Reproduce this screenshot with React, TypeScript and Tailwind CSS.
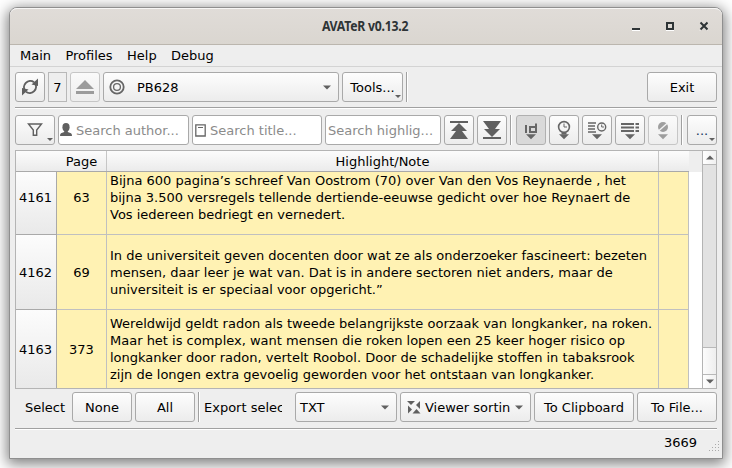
import type { ReactNode } from "react";

const BTN =
  "relative flex h-[30px] shrink-0 items-center rounded-[3px] border bg-linear-to-b whitespace-pre";
const FACE = "border-[#a9a9a9] from-[#fdfdfd] to-[#ececec]";
const FACE_DISABLED = "border-[#c6c6c6] from-[#fafafa] to-[#eeeeee]";
const FACE_PRESSED = "border-[#b0b0b0] from-[#d9d9d9] to-[#d9d9d9]";
const FIELD =
  "flex h-[30px] shrink-0 items-center rounded-[3px] border border-[#a9a9a9] bg-white text-[#8b8b8b] whitespace-pre";

function Arrow({ className = "" }: { className?: string }) {
  return (
    <svg className={className} width="8" height="5" viewBox="0 0 8 5">
      <path d="M0 0.5H8L4 4.5Z" fill="#606060" />
    </svg>
  );
}

function CornerArrow() {
  return (
    <svg className="absolute right-px bottom-[3px]" width="6" height="3" viewBox="0 0 6 3">
      <path d="M0 0H6L3 3Z" fill="#606060" />
    </svg>
  );
}

function Sep({ className }: { className: string }) {
  return <div className={`h-[30px] w-[2px] shrink-0 border-l border-l-[#a0a0a0] bg-white ${className}`} />;
}

function Rule({ className }: { className: string }) {
  return <div className={`h-[2px] shrink-0 border-t border-t-[#a0a0a0] bg-white ${className}`} />;
}

function SortButton({ children, face = FACE }: { children: ReactNode; face?: string }) {
  return (
    <div className={`${BTN} ${face} mr-[3px] w-[30px] justify-center`}>
      <svg width="28" height="28" viewBox="0 0 28 28" fill="none" stroke="#666" strokeWidth="2">
        {children}
        <path d="M9 18.3H19L14 23.3Z" fill="#666" stroke="none" />
      </svg>
    </div>
  );
}

const rows = [
  {
    id: "4161",
    page: "63",
    height: "h-[63px]",
    pad: "",
    numPad: "pb-[11px]",
    lines: [
      "Bijna 600 pagina’s schreef Van Oostrom (70) over Van den Vos Reynaerde , het",
      "bijna 3.500 versregels tellende dertiende-eeuwse gedicht over hoe Reynaert de",
      "Vos iedereen bedriegt en vernedert.",
    ],
  },
  {
    id: "4162",
    page: "69",
    height: "h-[75px]",
    pad: "pt-[12px]",
    numPad: "",
    lines: [
      "In de universiteit geven docenten door wat ze als onderzoeker fascineert: bezeten",
      "mensen, daar leer je wat van. Dat is in andere sectoren niet anders, maar de",
      "universiteit is er speciaal voor opgericht.”",
    ],
  },
  {
    id: "4163",
    page: "373",
    height: "h-[79px]",
    pad: "pt-[5px]",
    numPad: "",
    lines: [
      "Wereldwijd geldt radon als tweede belangrijkste oorzaak van longkanker, na roken.",
      "Maar het is complex, want mensen die roken lopen een 25 keer hoger risico op",
      "longkanker door radon, vertelt Roobol. Door de schadelijke stoffen in tabaksrook",
      "zijn de longen extra gevoelig geworden voor het ontstaan van longkanker.",
    ],
  },
];

function TitleBar() {
  return (
    <div className="grid h-[37px] shrink-0 grid-cols-[1fr_auto_1fr] items-center rounded-t-[7px] border-t border-b border-t-[#f7f6f5] border-b-[#bbb6ae] bg-linear-to-b from-[#e0dcd8] to-[#dad6d0]">
      <span />
      <span className="scale-x-[0.92] pr-[3px] font-['Noto_Sans',sans-serif] text-[13.3px] font-bold tracking-[-0.25px] text-[#2e3436]">
        AVATeR v0.13.2
      </span>
      <svg className="mr-[14px] mb-[2px] justify-self-end" width="76" height="12" viewBox="0 0 76 12">
        <path d="M0 10.5H8M34 10.5H42M68 10.5L69.5 9M76 10.5L74.5 9" stroke="#fff" />
        <path d="M0 9H8" stroke="#2e3436" strokeWidth="2" />
        <rect x="35" y="3" width="6" height="6" fill="none" stroke="#2e3436" strokeWidth="2" />
        <path d="M68.5 2.5L75.5 9.5M75.5 2.5L68.5 9.5" stroke="#2e3436" strokeWidth="2" />
      </svg>
    </div>
  );
}

function MainToolbar() {
  return (
    <div className="mt-[5px] flex shrink-0 pl-[5px]">
      <div className={`${BTN} ${FACE} w-[30px] justify-center`}>
        <svg width="18" height="18" viewBox="0 0 18 18" fill="none" stroke="#606060" strokeWidth="2">
          <path d="M4.2 13A6.3 6.3 0 0 1 13 4.2M13.8 5A6.3 6.3 0 0 1 5 13.8" />
          <path d="M17 0.5V8L10.5 6.5ZM1 17.5V10L7.5 11.5Z" fill="#606060" stroke="none" />
        </svg>
      </div>
      <div className="ml-[3px] flex h-[30px] w-[19px] items-center justify-center border border-[#b8b8b8]">7</div>
      <div className={`${BTN} ${FACE_DISABLED} ml-[3px] w-[30px] justify-center`}>
        <svg width="18" height="14" viewBox="0 0 18 14" fill="#9c9c9c">
          <path d="M9 0L18 9H0ZM0 11H18V14H0Z" />
        </svg>
      </div>
      <div className={`${BTN} ${FACE} ml-[3px] w-[236px]`}>
        <svg className="ml-[5px]" width="16" height="16" viewBox="0 0 16 16" fill="none" stroke="#666">
          <circle cx="8" cy="8" r="6.7" strokeWidth="1.8" />
          <circle cx="8" cy="8" r="3.4" strokeWidth="1.3" />
        </svg>
        <span className="ml-[12px] flex-1">PB628</span>
        <Arrow className="mr-[7px]" />
      </div>
      <div className={`${BTN} ${FACE} ml-[3px] w-[61px] justify-center`}>
        Tools...
        <CornerArrow />
      </div>
      <Sep className="ml-[3px]" />
      <div className={`${BTN} ${FACE} mr-[5px] ml-auto w-[70px] justify-center`}>Exit</div>
    </div>
  );
}

function SearchToolbar() {
  return (
    <div className="mt-[6px] flex shrink-0 pl-[5px]">
      <div className={`${BTN} ${FACE} mr-[3px] w-[40px] justify-center`}>
        <svg width="16" height="14" viewBox="0 0 16 14" fill="none" stroke="#606060" strokeWidth="1.4">
          <path d="M1.5 1H14.5L9.7 7V12.3H6.3V7Z" />
        </svg>
        <CornerArrow />
      </div>
      <div className={`${FIELD} mr-[3px] w-[131px]`}>
        <svg className="ml-px" width="12" height="14" viewBox="0 0 12 14" fill="#606060">
          <ellipse cx="6" cy="4.3" rx="3.6" ry="4.2" />
          <path d="M4.2 7H7.8V9L11 10.2Q12 10.8 12 13H0Q0 10.8 1 10.2L4.2 9Z" />
        </svg>
        <span className="ml-[4px]">Search author...</span>
      </div>
      <div className={`${FIELD} mr-[3px] w-[130px]`}>
        <svg className="ml-[2px]" width="11" height="13" viewBox="0 0 11 13" fill="none" stroke="#666">
          <path d="M0.8 0.8H10.2V12H0.8Z" strokeWidth="1.3" />
          <path d="M3 3.5H8" />
        </svg>
        <span className="ml-[4px]">Search title...</span>
      </div>
      <div className={`${FIELD} mr-[3px] w-[116px] pl-[2px]`}>Search highlig...</div>
      <div className={`${BTN} ${FACE} mr-[3px] w-[30px] justify-center`}>
        <svg width="18" height="18" viewBox="0 0 18 18" fill="#606060">
          <path d="M0 0H18V2H0ZM9 2L17 10H12L18 18H0L6 10H1Z" />
        </svg>
      </div>
      <div className={`${BTN} ${FACE} mr-[3px] w-[30px] justify-center`}>
        <svg width="18" height="18" viewBox="0 0 18 18" fill="#606060">
          <path d="M0 16H18V18H0ZM9 16L17 8H12L18 0H0L6 8H1Z" />
        </svg>
      </div>
      <Sep className="mr-[4px]" />
      <SortButton face={FACE_PRESSED}>
        <path d="M9 9V17M13 11H19M19 7.5V17M12.5 16H20M13 10V17" />
      </SortButton>
      <SortButton>
        <circle cx="14" cy="11" r="5.4" strokeWidth="1.6" />
        <path d="M14 7.5V11H17" strokeWidth="1" />
        <path d="M11.5 17.5H16.5" />
      </SortButton>
      <SortButton>
        <path d="M5 7H13M5 10H12M5 13H12M5 16H13" strokeWidth="1.7" />
        <circle cx="18.7" cy="11" r="4" strokeWidth="1.4" />
        <path d="M18.7 8.5V11H21" strokeWidth="1" />
      </SortButton>
      <SortButton>
        <path d="M5 8H18M5 11.5H18M5 15H18M19.5 8H23M19.5 11.5H23M19.5 15H23" />
      </SortButton>
      <SortButton face={`${FACE_DISABLED} [&_svg]:opacity-60`}>
        <circle cx="14" cy="11" r="5" fill="#666" stroke="none" />
        <path d="M9.5 15L18.5 7" stroke="#f5f5f5" strokeWidth="1.4" />
      </SortButton>
      <Sep className="mr-[4px]" />
      <div className={`${BTN} ${FACE} w-[30px] justify-center text-[#17375e]`}>
        ...
        <CornerArrow />
      </div>
    </div>
  );
}

function HighlightTable() {
  return (
    <div className="mx-[5px] mt-[5px] flex h-[239px] shrink-0 border border-[#b4b4b4] bg-white">
      <div className="w-[686px] overflow-hidden">
        <div className="flex h-[21px] bg-[#eeeeee]">
          <div className="flex w-[673px] border-b border-[#a9a9a9] bg-linear-to-b from-[#fcfcfc] to-[#ebebeb] text-center leading-[22px]">
            <div className="w-[91px] border-r border-[#c6c6c6] pl-[41px]">Page</div>
            <div className="w-[552px] border-r border-[#c6c6c6]">Highlight/Note</div>
          </div>
        </div>
        {rows.map((row) => (
          <div key={row.id} className={`flex w-[673px] overflow-hidden ${row.height}`}>
            <div
              className={`flex w-[41px] shrink-0 items-center justify-center border-r border-b border-[#a9a9a9] bg-linear-to-b from-[#fcfcfc] to-[#e9e9e9] pr-px ${row.numPad}`}
            >
              {row.id}
            </div>
            <div
              className={`flex w-[50px] shrink-0 items-center justify-center border-r border-b border-[#c0c0c0] bg-[#fff2b3] ${row.numPad}`}
            >
              {row.page}
            </div>
            <div
              className={`w-[552px] shrink-0 border-r border-b border-[#c0c0c0] bg-[#fff2b3] pl-[3px] leading-[17px] whitespace-pre ${row.pad}`}
            >
              {row.lines.map((line) => (
                <div key={line}>{line}</div>
              ))}
            </div>
            <div className="w-[30px] shrink-0 border-r border-b border-[#c0c0c0] bg-[#fff2b3]" />
          </div>
        ))}
      </div>
      <div className="flex flex-1 flex-col border-l border-[#b4b4b4] bg-[#e2e2e2]">
        <div className="flex h-[14px] items-center justify-center border-b border-[#b8b8b8] bg-linear-to-r from-white to-[#f0f0f0]">
          <Arrow className="rotate-180" />
        </div>
        <div className="flex-1" />
        <div className="h-[28px] border-t border-b border-[#b8b8b8] bg-linear-to-r from-[#fcfcfc] to-[#eeeeee]" />
        <div className="flex h-[13px] items-center justify-center bg-linear-to-r from-white to-[#f0f0f0]">
          <Arrow />
        </div>
      </div>
    </div>
  );
}

function ExportBar() {
  return (
    <div className="mt-[3px] flex shrink-0 items-center pl-[5px]">
      <span className="w-[57px] pl-[10px]">Select</span>
      <div className={`${BTN} ${FACE} mr-[3px] w-[60px] justify-center`}>None</div>
      <div className={`${BTN} ${FACE} mr-[3px] w-[60px] justify-center`}>All</div>
      <Sep className="mr-[4px]" />
      <span className="mr-[13px] w-[78px] shrink-0 overflow-hidden whitespace-pre">Export selec</span>
      <div className={`${BTN} ${FACE} mr-[3px] w-[102px] justify-between pr-[7px] pl-[4px]`}>
        TXT
        <Arrow />
      </div>
      <div className={`${BTN} ${FACE} mr-[3px] w-[131px]`}>
        <svg className="ml-[6px] shrink-0" width="14" height="13" viewBox="0 0 14 13" fill="#606060">
          <path d="M0 0H8L4 4ZM13 0V8L9 4ZM1 4.5L5 8.5L1 12.5ZM5.5 12.5L9.5 8L13.5 12.5Z" />
        </svg>
        <span className="ml-[4px] w-[86px]">Viewer sortin</span>
        <Arrow className="ml-[4px] shrink-0" />
      </div>
      <div className={`${BTN} ${FACE} mr-[3px] w-[100px] justify-center`}>To Clipboard</div>
      <div className={`${BTN} ${FACE} w-[80px] justify-center`}>To File...</div>
    </div>
  );
}

export default function App() {
  return (
    <div className="h-[468px] w-[732px] overflow-hidden bg-white pt-[7px] pl-[9px] font-['DejaVu_Sans',sans-serif] text-[13px] leading-[17px] text-black">
      <div className="flex h-[452px] w-[714px] flex-col rounded-t-[8px] border border-[#8f8f8f] bg-[#eeeeee] shadow-[0_3px_14px_2px_rgba(0,0,0,0.5)]">
        <TitleBar />
        <div className="flex h-[22px] shrink-0 items-center gap-[14.4px] border-b border-[#d3d3d3] pl-[10px]">
          <span>Main</span>
          <span>Profiles</span>
          <span>Help</span>
          <span>Debug</span>
        </div>
        <MainToolbar />
        <Rule className="mx-[5px] mt-[5px]" />
        <SearchToolbar />
        <HighlightTable />
        <ExportBar />
        <Rule className="mx-[5px] mt-[6px]" />
        <div className="relative flex flex-1 items-center justify-end pr-[25px] pb-[3px]">
          3669
          <svg className="absolute right-[2px] bottom-[6px]" width="11" height="11" viewBox="0 0 11 11" fill="#aaa">
            <path d="M9 0h1v1h-1zM6 3h1v1h-1zM9 3h1v1h-1zM3 6h1v1h-1zM6 6h1v1h-1zM9 6h1v1h-1zM0 9h1v1h-1zM3 9h1v1h-1zM6 9h1v1h-1zM9 9h1v1h-1z" />
          </svg>
        </div>
      </div>
    </div>
  );
}
